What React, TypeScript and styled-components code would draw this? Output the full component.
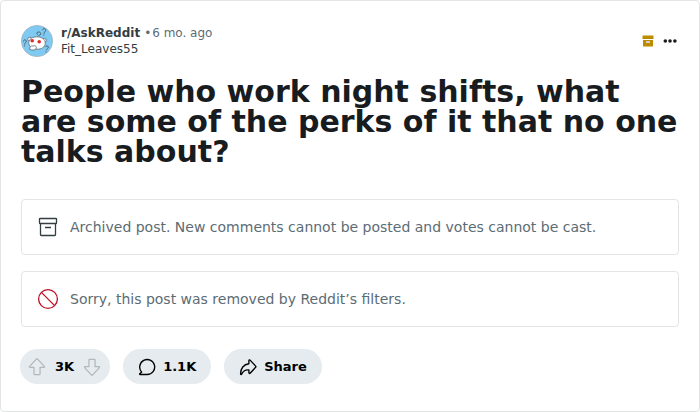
import React from "react";
import styled, { createGlobalStyle } from "styled-components";

const GlobalStyle = createGlobalStyle`
  * { box-sizing: border-box; }
  body {
    margin: 0;
    background: #fff;
    font-family: "DejaVu Sans", sans-serif;
  }
`;

const Card = styled.article`
  min-height: 100vh;
  padding: 24px 20px 26px;
  border: 1px solid #e3e4e4;
  border-radius: 4px;
  background: #fff;
`;

const Header = styled.header`
  display: flex;
  align-items: center;
  gap: 8px;
`;

const Byline = styled.div`
  flex: 1;
  font-size: 12px;
  line-height: 16px;
  color: #333d42;
`;

const BylineRow = styled.div`
  display: flex;
  gap: 4px;
  color: #5c6c74;
`;

const Posted = styled.span`
  display: flex;
  gap: 1px;
`;

const TextLink = styled.a<{ $strong?: boolean }>`
  color: #333d42;
  text-decoration: none;
  font-weight: ${(p) => (p.$strong ? 700 : 400)};
`;

const Tools = styled.div`
  display: flex;
  align-items: center;
  gap: 8px;
`;

const IconButton = styled.button`
  display: flex;
  padding: 0;
  border: 0;
  background: none;
  color: #181c1f;
  cursor: pointer;
`;

const MoreButton = styled(IconButton)`
  padding-right: 1px;
`;

const Title = styled.h1`
  margin: 20px 0 32px;
  font-size: 30px;
  line-height: 30px;
  font-weight: 700;
  color: #181c1f;
`;

const Notices = styled.div`
  display: grid;
  gap: 16px;
`;

const Notice = styled.div`
  display: flex;
  align-items: center;
  gap: 11px;
  min-height: 56px;
  padding: 0 15px;
  border: 1px solid #e3e4e4;
  border-radius: 4px;
  font-size: 14px;
  line-height: 20px;
  color: #5c6c74;

  svg { flex: none; }
`;

const Actions = styled.footer`
  display: flex;
  flex-wrap: wrap;
  gap: 13px;
  margin: 22px 0 0 -1px;
`;

const pill = `
  display: flex;
  align-items: center;
  height: 35px;
  border: 0;
  border-radius: 18px;
  background: #e5ebee;
  color: #000;
  font-family: inherit;
  font-size: 13px;
  line-height: 16px;
  font-weight: 700;
`;

const VotePill = styled.div`
  ${pill}
  gap: 9px;
  padding: 0 9px 0 8px;
`;

const PillButton = styled.button`
  ${pill}
  gap: 7px;
  padding: 0 15px;
  cursor: pointer;
`;

const VoteButton = styled(IconButton)`
  color: #b2b7b9;
`;

const Avatar = () => (
  <svg width="32" height="32" viewBox="0 0 32 32" role="img" aria-label="r/AskReddit">
    <circle cx="16" cy="16" r="15.6" fill="#7fcaf3" stroke="#a3b3bc" strokeWidth="0.8" />
    <g fill="none" stroke="#4a5d6a" strokeWidth="1" strokeLinecap="round">
      <path d="M21.6 4.8C22 2.8 25 3.2 24.6 5.4C24.3 6.8 23.2 6.8 23 8.4M22.8 10v.2" />
      <path d="M2.4 16.2C2.8 14 5.6 14.5 5.2 16.5C4.9 17.7 3.9 17.8 3.6 19.2M3.4 20.8v.2" />
      <path d="M24.6 21.8C25.3 20.2 28 20.9 27.2 22.8C26.7 23.8 25.8 23.8 25.4 25M25 26.8v.2" />
      <path d="M16.6 12C16.8 10.6 18.2 10.4 19.3 9.8C20.5 8.5 19 6.6 17.2 7C15.6 7.3 15.2 8.8 16.4 9.4" />
    </g>
    <g fill="#fff" stroke="#5b676f" strokeWidth="0.8">
      <circle cx="8.6" cy="14.2" r="1.9" />
      <circle cx="23.2" cy="15.4" r="2.1" />
      <path d="M15.6 11.8C20.6 11.6 24.4 14.4 24.3 18C24.2 22 20.5 24.4 16 24.2C11 24 7.4 21.4 7.8 17.4C8.2 13.8 11.6 12 15.6 11.8Z" />
      <path d="M8.8 24.6C8.4 22.2 9.6 20.4 12 21C14.4 20 16.2 21.8 15 23.8C13.5 25.4 11 25.3 8.8 24.6Z" />
    </g>
    <circle cx="11.2" cy="15.8" r="1.8" fill="#df2c2c" />
    <circle cx="18.2" cy="16.8" r="1.8" fill="#df2c2c" />
  </svg>
);

const ArchivedBadge = () => (
  <svg width="12" height="12" viewBox="0 0 12 12" role="img" aria-label="Archived">
    <path fill="#bd8b00" d="M1 .5h10a.5.5 0 0 1 .5.5v3h-11V1A.5.5 0 0 1 1 .5ZM1 5h10v6a.5.5 0 0 1-.5.5h-9A.5.5 0 0 1 1 11Z" />
    <path fill="#d2d0c4" d="M4 6h4v2H4Z" />
  </svg>
);

const MoreIcon = () => (
  <svg width="16" height="16" viewBox="0 0 16 16" fill="currentColor" aria-hidden="true">
    <circle cx="3.3" cy="8" r="1.8" />
    <circle cx="8" cy="8" r="1.8" />
    <circle cx="12.9" cy="8" r="1.8" />
  </svg>
);

const ArchiveIcon = () => (
  <svg width="22" height="20" viewBox="0 0 22 20" fill="none" stroke="#333d42" strokeWidth="1.3" aria-hidden="true">
    <rect x="2.5" y="1.5" width="17" height="5" rx="0.6" />
    <path d="M3.5 6.5V17.7a.8.8 0 0 0 .8.8H17.7a.8.8 0 0 0 .8-.8V6.5M8 10.5h6" />
  </svg>
);

const RemovedIcon = () => (
  <svg width="22" height="22" viewBox="0 0 22 22" fill="none" stroke="#bc0f24" strokeWidth="1.3" aria-hidden="true">
    <circle cx="11" cy="11" r="9.4" />
    <path d="M4.4 4.4L17.6 17.6" />
  </svg>
);

const VoteArrow = ({ down = false }: { down?: boolean }) => (
  <svg width="18" height="18" viewBox="0 0 20 20" fill="none" stroke="currentColor" strokeWidth="1.35" strokeLinejoin="round" aria-hidden="true">
    <path
      transform={down ? "rotate(180 10 10)" : undefined}
      d="M12.8 18.4H7.2a.6.6 0 0 1-.6-.6V10.4H2.2a.6.6 0 0 1-.45-1L9.55.9a.6.6 0 0 1 .9 0L18.25 9.4a.6.6 0 0 1-.45 1H13.4v7.4a.6.6 0 0 1-.6.6Z"
    />
  </svg>
);

const CommentIcon = () => (
  <svg width="18" height="18" viewBox="0 0 20 20" fill="none" stroke="currentColor" strokeWidth="1.5" strokeLinejoin="round" aria-hidden="true">
    <path d="M10.3 18.3H2.3a.5.5 0 0 1-.35-.85L4 15.5A8.3 8.3 0 1 1 10.3 18.3Z" />
  </svg>
);

const ShareIcon = () => (
  <svg width="18" height="18" viewBox="0 0 20 20" fill="none" stroke="currentColor" strokeWidth="1.5" strokeLinejoin="round" aria-hidden="true">
    <path d="M11 6.4V2.9a.8.8 0 0 1 1.35-.55L18.5 9a1 1 0 0 1 0 1.35L12.35 17A.8.8 0 0 1 11 16.4V13.2C7.6 12.8 4.6 14.2 2.9 18a.6.6 0 0 1-1.15-.25C1.7 11.8 5.2 6.9 11 6.4Z" />
  </svg>
);

export default function App() {
  return (
    <>
      <GlobalStyle />
      <Card>
        <Header>
          <Avatar />
          <Byline>
            <BylineRow>
              <TextLink $strong href="#community">r/AskReddit</TextLink>
              <Posted>
                <span>•</span>
                <time>6 mo. ago</time>
              </Posted>
            </BylineRow>
            <TextLink href="#author">Fit_Leaves55</TextLink>
          </Byline>
          <Tools>
            <ArchivedBadge />
            <MoreButton type="button" aria-label="More options">
              <MoreIcon />
            </MoreButton>
          </Tools>
        </Header>
        <Title>People who work night shifts, what are some of the perks of it that no one talks about?</Title>
        <Notices>
          <Notice>
            <ArchiveIcon />
            <span>Archived post. New comments cannot be posted and votes cannot be cast.</span>
          </Notice>
          <Notice>
            <RemovedIcon />
            <span>Sorry, this post was removed by Reddit’s filters.</span>
          </Notice>
        </Notices>
        <Actions>
          <VotePill>
            <VoteButton type="button" aria-label="Upvote" disabled>
              <VoteArrow />
            </VoteButton>
            <span>3K</span>
            <VoteButton type="button" aria-label="Downvote" disabled>
              <VoteArrow down />
            </VoteButton>
          </VotePill>
          <PillButton type="button" aria-label="1.1K comments">
            <CommentIcon />
            <span>1.1K</span>
          </PillButton>
          <PillButton type="button">
            <ShareIcon />
            <span>Share</span>
          </PillButton>
        </Actions>
      </Card>
    </>
  );
}
